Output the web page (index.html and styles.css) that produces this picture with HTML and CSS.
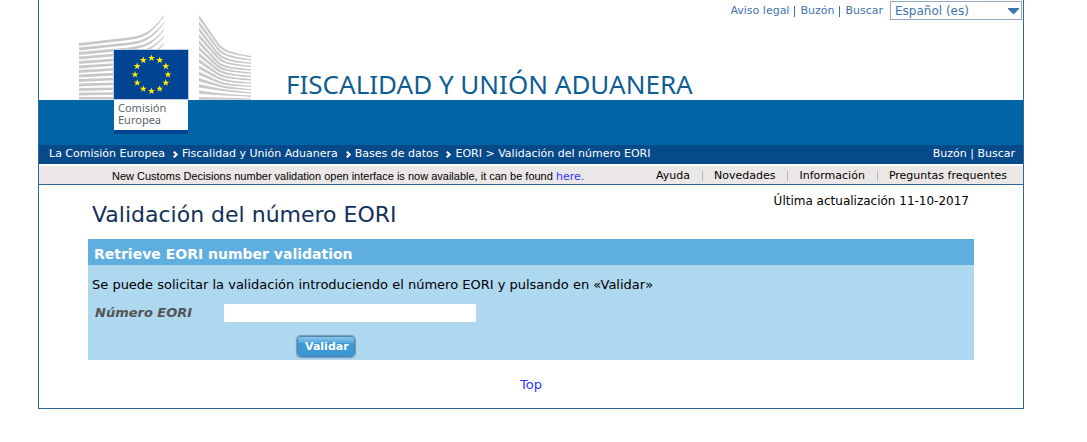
FILE: index.html
```
<!DOCTYPE html>
<html lang="es">
<head>
<meta charset="utf-8">
<meta name="viewport" content="width=device-width, initial-scale=1">
<title>Validación del número EORI</title>
<link rel="stylesheet" href="styles.css">
</head>
<body>
<div class="page">
  <header class="banner">
    <svg class="logo" width="173" height="120" viewBox="0 0 173 120" role="img" aria-label="Comisión Europea">
      <defs>
        <path id="star" fill="#ffed00" d="M0-3.6 .9-1.1 3.5-1.1 1.4.5 2.2 3 0 1.5-2.2 3-1.4.5-3.5-1.1-.9-1.1z"/>
      </defs>
      <g fill="#c6c8ca">
        <path d="M0 29 50 23.4C66 21.5 74 16 85 1V2.6C74 18 66 24.5 50 26L0 32z"/>
        <path d="M0 33.5 50 28.4C66 26.5 74 22 85 8V9.6C74 24 66 29.5 50 31L0 36.5z"/>
        <path d="M0 38 50 33.4C66 31.5 74 28 85 15V16.6C74 30 66 34.5 50 36L0 41z"/>
        <path d="M0 42.5 50 38.4C66 36.5 74 34 85 22V23.6C74 36 66 39.5 50 41L0 45.5z"/>
        <path d="M0 47 50 43.4C66 41.5 75 39 85 29V30.6C75 41 66 44.5 50 46L0 50z"/>
        <path d="M0 51.5 36 49.2V51.8L0 54.5z"/>
        <path d="M0 56 36 54V56.6L0 59z"/>
        <path d="M0 60.5 36 58.8V61.4L0 63.5z"/>
        <path d="M0 65 36 63.7V66.3L0 68z"/>
        <path d="M0 69.5 36 68.5V71.1L0 72.5z"/>
        <path d="M0 74 36 73.4V76L0 77z"/>
        <path d="M0 78.5 36 78.2V80.8L0 81.5z"/>
        <path d="M0 83H36V85.6H0z"/>
        <path d="M120 1 138 27C144 36 150 38 172 42V43.3C150 40 143 38 137 29L120 5z"/>
        <path d="M120 7.3 138 32C144 40 150 42 172 45.3V46.6C150 44 143 42 137 34L120 11.3z"/>
        <path d="M120 13.6 138 37C144 44 150 46 172 48.6V49.9C150 48 143 46 137 39L120 17.6z"/>
        <path d="M120 19.9 138 41C144 48 150 49 172 51.9V53.2C150 51 143 50 137 43L120 23.9z"/>
        <path d="M120 26.2 138 46C144 52 150 53 172 55.2V56.5C150 55 143 54 137 48L120 30.2z"/>
        <path d="M120 32.5 138 50C144 55 150 56 172 58.5V59.8C150 58 143 57 137 52L120 36.3z"/>
        <path d="M120 38.8 138 54C144 58 150 60 172 61.8V63.1C150 62 143 60 137 56L120 42.5z"/>
        <path d="M120 45.1 138 58C144 62 150 63 172 65.1V66.4C150 65 143 64 137 60L120 48.7z"/>
        <path d="M120 51.4 138 62C144 65 150 67 172 68.4V69.7C150 69 143 67 137 64L120 54.9z"/>
        <path d="M120 57.7 138 66C144 69 150 70 172 71.7V73C150 72 143 71 137 68L120 61.1z"/>
        <path d="M120 64 138 70C144 72 150 73 172 75V76.3C150 75 143 74 137 72L120 67.3z"/>
        <path d="M120 70.3 138 74C144 75 150 76 172 78.3V79.6C150 78 143 77 137 76L120 73.5z"/>
        <path d="M120 76.6 138 79C150 80 160 81 172 81.6V82.9C160 82 150 82 137 81L120 79.7z"/>
        <path d="M120 82.9 172 84.5V85.8H120z"/>
      </g>
      <path fill="#c3cbe0" d="M34 35h76v51H34z"/>
      <path fill="#004494" d="M35 36h74v49H35z"/>
      <path fill="#fff" d="M35 86h74v30H35z"/>
      <path fill="#004494" d="M35 116h74v4H35z"/>
      <use href="#star" x="72.5" y="44"/>
      <use href="#star" x="80.7" y="46.2"/>
      <use href="#star" x="86.8" y="52.2"/>
      <use href="#star" x="89" y="60.5"/>
      <use href="#star" x="86.8" y="68.8"/>
      <use href="#star" x="80.7" y="74.8"/>
      <use href="#star" x="72.5" y="77"/>
      <use href="#star" x="64.3" y="74.8"/>
      <use href="#star" x="58.2" y="68.8"/>
      <use href="#star" x="56" y="60.5"/>
      <use href="#star" x="58.2" y="52.2"/>
      <use href="#star" x="64.3" y="46.2"/>
      <text class="logo-text"><tspan x="39" y="98">Comisión</tspan><tspan x="39" y="110">Europea</tspan></text>
    </svg>
    <div class="banner-main">
      <div class="service">
        <nav class="service-links">
          <a href="#">Aviso legal</a><a href="#">Buzón</a><a href="#">Buscar</a>
        </nav>
        <div class="language">
          <select aria-label="Idioma"><option>Español (es)</option></select>
          <svg class="arrow" width="11" height="6" viewBox="0 0 11 6" aria-hidden="true"><path fill="#4274ad" d="M0 0h11v1L6 6H5L0 1z"/></svg>
        </div>
      </div>
      <div class="site-name">FISCALIDAD Y UNIÓN ADUANERA</div>
    </div>
  </header>
  <div class="path">
    <nav class="crumbs">
      <a href="#">La Comisión Europea</a><svg width="5" height="7" viewBox="0 0 5 7" aria-hidden="true"><path d="M.7.7 3.7 3.5.7 6.3"/></svg><a href="#">Fiscalidad y Unión Aduanera</a><svg width="5" height="7" viewBox="0 0 5 7" aria-hidden="true"><path d="M.7.7 3.7 3.5.7 6.3"/></svg><a href="#">Bases de datos</a><svg width="5" height="7" viewBox="0 0 5 7" aria-hidden="true"><path d="M.7.7 3.7 3.5.7 6.3"/></svg><span><a href="#">EORI</a> &gt; Validación del número EORI</span>
    </nav>
    <div><a href="#">Buzón</a> | <a href="#">Buscar</a></div>
  </div>
  <div class="toolbar">
    <p class="notice">New Customs Decisions number validation open interface is now available, it can be found <a href="#">here.</a></p>
    <nav class="menu">
      <a href="#">Ayuda</a><a href="#">Novedades</a><a href="#">Información</a><a href="#">Preguntas frequentes</a>
    </nav>
  </div>
  <main class="content">
    <div class="heading">
      <h1>Validación del número EORI</h1>
      <p class="updated">Última actualización 11-10-2017</p>
    </div>
    <form class="panel">
      <h2>Retrieve EORI number validation</h2>
      <p>Se puede solicitar la validación introduciendo el número EORI y pulsando en «Validar»</p>
      <div class="field">
        <label for="eori">Número EORI</label>
        <input id="eori" type="text">
      </div>
      <button class="submit" type="button">Validar</button>
    </form>
    <a class="top" href="#">Top</a>
  </main>
</div>
</body>
</html>
```
FILE: styles.css
```
* {
  box-sizing: border-box;
}

body {
  margin: 0;
  background: #fff;
  color: #000;
  font: 11px/14px Verdana, "DejaVu Sans", sans-serif;
}

a {
  color: inherit;
  text-decoration: none;
}

h1, h2, p {
  margin: 0;
  font-weight: normal;
}

.page {
  margin: 0 63px 0 38px;
  border: 1px solid #336699;
  border-top: 0;
}

.banner {
  display: flex;
  align-items: flex-start;
  height: 145px;
  padding: 0 1px 0 40px;
  background: linear-gradient(#fff 100px, #0065a4 100px);
}

.logo {
  flex: none;
  margin-top: 14px;
}

.logo-text {
  fill: #58676f;
  font: 11px "Noto Sans", sans-serif;
}

.banner-main {
  flex: 1;
  display: flex;
  flex-direction: column;
  height: 100px;
  padding-left: 34px;
}

.service {
  display: flex;
  justify-content: flex-end;
  align-items: center;
  gap: 7px;
  padding-top: 1px;
  color: #4274ad;
}

.service-links {
  display: flex;
}

.service-links a + a {
  margin-left: 5px;
  padding-left: 6px;
  background: linear-gradient(#4274ad, #4274ad) 0 2px / 1px 11px no-repeat;
}

.language {
  display: grid;
  align-items: center;
  width: 132px;
}

.language select {
  grid-area: 1 / 1;
  appearance: none;
  height: 19px;
  padding: 0 4px;
  border: 1px solid #93a9bf;
  border-radius: 0;
  background: #fff;
  color: inherit;
  font: inherit;
  font-size: 12px;
}

.arrow {
  grid-area: 1 / 1;
  justify-self: end;
  margin-right: 3px;
  pointer-events: none;
}

.site-name {
  margin-top: auto;
  color: #0f5d94;
  font: 26px/32px "Noto Sans", sans-serif;
}

.path {
  display: flex;
  justify-content: space-between;
  padding: 2px 8px 3px 10px;
  background: #064a8a;
  color: #fff;
}

.crumbs {
  display: flex;
  align-items: center;
}

.crumbs svg {
  margin: 0 4px 0 8px;
  fill: none;
  stroke: #fff;
  stroke-width: 2;
}

.toolbar {
  display: flex;
  justify-content: space-between;
  align-items: center;
  padding: 3px 16px 1px 73px;
  border-top: 2px solid #fff;
  border-bottom: 1px solid #336699;
  background: #ebe7e6;
}

.notice {
  font-family: Arial, "Liberation Sans", sans-serif;
  font-size: 11px;
}

.notice a {
  color: #3333ff;
  font: 11px Verdana, "DejaVu Sans", sans-serif;
}

.menu {
  display: flex;
}

.menu a + a {
  margin-left: 12px;
  padding-left: 12px;
  background: linear-gradient(#b5b5c0, #b5b5c0) 0 2px / 1px 10px no-repeat;
}

.content {
  padding: 8px 49px 16px;
}

.heading {
  display: flex;
  justify-content: space-between;
  padding: 0 5px 10px 4px;
}

.heading h1 {
  padding-top: 8px;
  color: #12305a;
  font-size: 22px;
  line-height: 28px;
}

.updated {
  font-size: 12px;
  line-height: 16px;
}

.panel {
  padding-bottom: 3px;
  background: #aed7f0;
}

.panel h2 {
  padding: 7px 6px 3px;
  background: #5faee0;
  color: #fff;
  font-size: 14px;
  font-weight: bold;
  line-height: 16px;
}

.panel p {
  padding: 13px 4px 12px;
  font-size: 13px;
}

.field {
  display: flex;
  align-items: center;
  padding-left: 7px;
}

.field label {
  width: 129px;
  color: #555;
  font-size: 13px;
  font-style: italic;
  font-weight: bold;
}

.field input {
  width: 252px;
  height: 18px;
  padding: 0 4px;
  border: 0;
  background: #fff;
  font: inherit;
}

.submit {
  display: block;
  margin: 14px 0 0 209px;
  padding: 3px 5px 2px 7px;
  border: 1px solid #4f87ae;
  border-radius: 4px;
  background: linear-gradient(#8cc4ea, #55a8dd 30%, #3c97d4 35%);
  box-shadow: 0 0 1px 1px #6f9ab8;
  color: #fff;
  font: bold 11px/14px Verdana, "DejaVu Sans", sans-serif;
}

.top {
  display: block;
  margin-top: 18px;
  color: #3333ff;
  font-size: 13px;
  text-align: center;
}
```
